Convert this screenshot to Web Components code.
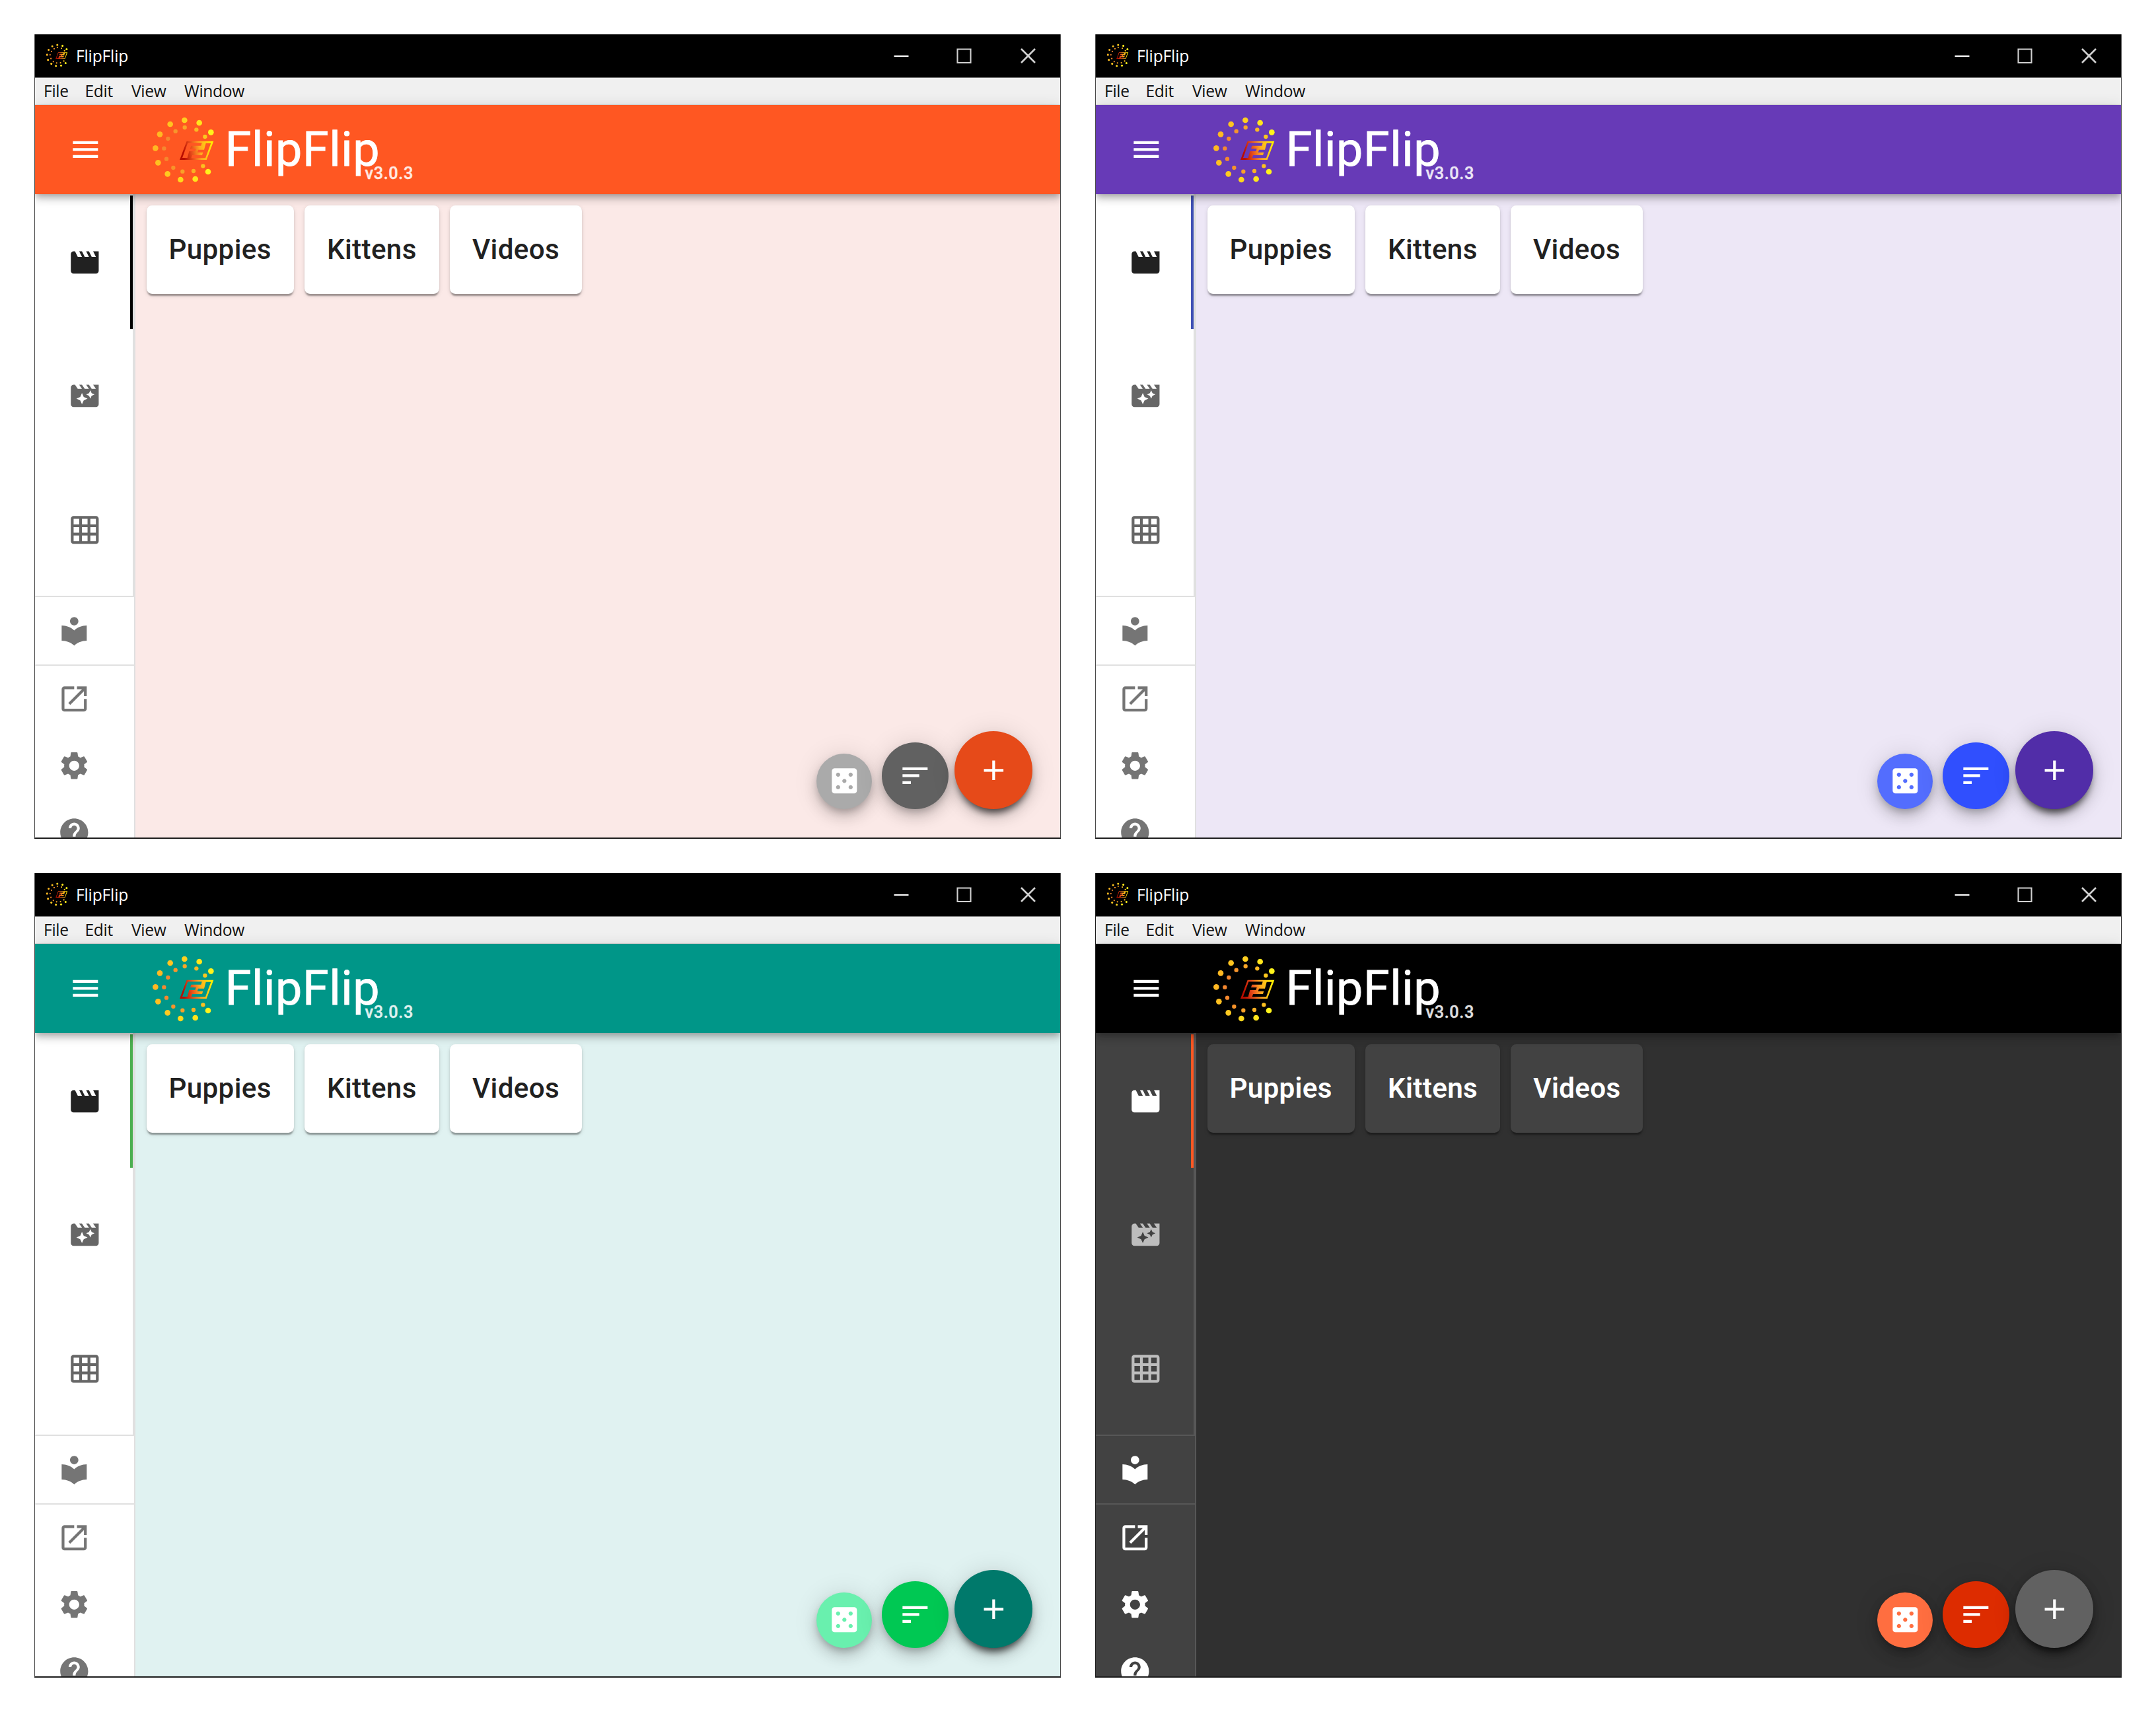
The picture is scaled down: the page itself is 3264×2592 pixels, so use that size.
<!DOCTYPE html>
<html lang="en">
<head>
<meta charset="utf-8">
<title>FlipFlip themes</title>
<style>
  html, body { margin: 0; background: #fff; }
  body { width: 3264px; height: 2592px; overflow: hidden; font-family: Roboto, "Liberation Sans", sans-serif; }
  .deep-orange { --bar:#ff5722; --bg:#fbe9e7; --mark:#000; --add:#e64a19; --sort:#616161; --dice:#aaa; }
  .purple { --bar:#673ab7; --bg:#ede7f6; --mark:#3f51b5; --add:#512da8; --sort:#304ffe; --dice:#536dfe; }
  .teal { --bar:#009688; --bg:#e0f2f1; --mark:#4caf50; --add:#00796b; --sort:#00c853; --dice:#69f0ae; }
  .dark { --bar:#000; --bg:#303030; --mark:#ff5722; --add:#616161; --sort:#dd2c00; --dice:#ff6e40;
    --paper:#424242; --line:#575757; --ink:#fff; --tab:#bdbdbd; --nav:#fff; --edge:#1c1c1c; --weight:600; --track:.29px; }
</style>
</head>
<body>
<theme-gallery>
  <flip-window class="deep-orange"></flip-window>
  <flip-window class="purple"></flip-window>
  <flip-window class="teal"></flip-window>
  <flip-window class="dark"></flip-window>
</theme-gallery>
<script>
const ICONS = {
  menu: 'M3 18h18v-2H3v2zm0-5h18v-2H3v2zm0-7v2h18V6H3z',
  movie: 'M18 4l2 4h-3l-2-4h-2l2 4h-3l-2-4H8l2 4H7L5 4H4c-1.1 0-1.99.9-1.99 2L2 18c0 1.1.9 2 2 2h16c1.1 0 2-.9 2-2V4h-4z',
  filter: 'M18 4l2 3h-3l-2-3h-2l2 3h-3l-2-3H8l2 3H7L5 4H4c-1.1 0-1.99.9-1.99 2L2 18c0 1.1.9 2 2 2h16c1.1 0 2-.9 2-2V4h-4zm-6.75 11.25L10 18l-1.25-2.75L6 14l2.750-1.25L10 10l1.250 2.750L14 14l-2.750 1.250zm5.690-3.310L16 14l-.940-2.060L13 11l2.060-.940L16 8l.940 2.060L19 11l-2.060.940z',
  grid: 'M20 2H4c-1.1 0-2 .9-2 2v16c0 1.1.9 2 2 2h16c1.100 0 2-.9 2-2V4c0-1.100-.9-2-2-2zM8 20H4v-4h4v4zm0-6H4v-4h4v4zm0-6H4V4h4v4zm6 12h-4v-4h4v4zm0-6h-4v-4h4v4zm0-6h-4V4h4v4zm6 12h-4v-4h4v4zm0-6h-4v-4h4v4zm0-6h-4V4h4v4z',
  library: 'M12 11.550C9.640 9.350 6.480 8 3 8v11c3.480 0 6.640 1.350 9 3.550 2.360-2.190 5.520-3.550 9-3.550V8c-3.480 0-6.640 1.350-9 3.550zM12 8c1.660 0 3-1.340 3-3s-1.340-3-3-3-3 1.340-3 3 1.340 3 3 3z',
  launch: 'M19 19H5V5h7V3H5c-1.110 0-2 .9-2 2v14c0 1.100.890 2 2 2h14c1.100 0 2-.9 2-2v-7h-2v7zM14 3v2h3.590l-9.830 9.830 1.410 1.410L19 6.410V10h2V3h-7z',
  settings: 'M19.140 12.940c.04-.3.060-.610.060-.940 0-.320-.020-.640-.070-.940l2.030-1.580c.180-.140.230-.410.120-.610l-1.920-3.320c-.120-.220-.370-.290-.590-.220l-2.390.960c-.5-.380-1.030-.7-1.620-.940l-.360-2.540c-.040-.240-.240-.410-.480-.410h-3.840c-.240 0-.430.170-.470.410l-.360 2.540c-.590.240-1.130.570-1.620.940l-2.390-.960c-.220-.080-.470 0-.590.220L2.740 8.870c-.120.210-.080.470.120.610l2.030 1.580c-.050.3-.090.630-.090.940s.020.640.070.940l-2.030 1.580c-.180.140-.230.410-.120.610l1.920 3.320c.120.220.370.290.590.220l2.390-.960c.5.380 1.030.7 1.620.940l.360 2.540c.050.240.240.410.480.410h3.840c.240 0 .440-.170.470-.410l.360-2.540c.590-.240 1.130-.560 1.620-.940l2.390.960c.220.080.470 0 .590-.220l1.920-3.320c.120-.220.070-.470-.120-.610l-2.010-1.580zM12 15.600c-1.980 0-3.600-1.620-3.600-3.600s1.620-3.600 3.600-3.600 3.600 1.620 3.600 3.600-1.620 3.600-3.600 3.600z',
  help: 'M12 2C6.480 2 2 6.480 2 12s4.480 10 10 10 10-4.480 10-10S17.520 2 12 2zm1 17h-2v-2h2v2zm2.070-7.750l-.9.920C13.450 12.900 13 13.500 13 15h-2v-.5c0-1.100.450-2.100 1.170-2.830l1.240-1.260c.370-.360.590-.860.590-1.410 0-1.100-.9-2-2-2s-2 .9-2 2H8c0-2.210 1.790-4 4-4s4 1.790 4 4c0 .880-.360 1.680-.930 2.250z',
  casino: 'M19 3H5c-1.100 0-2 .9-2 2v14c0 1.100.9 2 2 2h14c1.100 0 2-.9 2-2V5c0-1.100-.9-2-2-2zM7.500 18c-.830 0-1.500-.670-1.500-1.500S6.670 15 7.500 15s1.500.670 1.500 1.500S8.330 18 7.500 18zm0-9C6.670 9 6 8.330 6 7.500S6.670 6 7.500 6 9 6.670 9 7.500 8.330 9 7.500 9zm4.500 4.500c-.830 0-1.500-.670-1.500-1.500s.670-1.500 1.500-1.500 1.500.670 1.500 1.500-.670 1.500-1.500 1.500zm4.500 4.500c-.830 0-1.500-.670-1.500-1.500s.670-1.500 1.500-1.500 1.500.670 1.500 1.500-.670 1.500-1.500 1.500zm0-9c-.830 0-1.500-.670-1.500-1.500S15.670 6 16.500 6s1.500.670 1.500 1.500S17.330 9 16.500 9z',
  sort: 'M3 18h6v-2H3v2zM3 6v2h18V6H3zm0 7h12v-2H3v2z',
  add: 'M19 13h-6v6h-2v-6H5v-2h6V5h2v6h6v2z'
};
const define = (name, html, setup) => customElements.define(name, class extends HTMLElement {
  connectedCallback() {
    if (this.shadowRoot) return;
    const root = this.attachShadow({ mode: 'open' });
    root.innerHTML = typeof html === 'function' ? html(this) : html;
    if (setup) setup(this);
  }
});

define('theme-gallery', `<style>
  :host { display:grid; grid-template-columns:1554px 1554px; grid-auto-rows:1218px; gap:52px; padding:52px; }
</style><slot></slot>`);

define('md-icon', el => `<style>
  :host { display:block; width:50.67px; height:50.67px; flex:none; }
  svg { display:block; width:100%; height:100%; fill:currentColor; }
</style><svg viewBox="0 0 24 24"><path d="${ICONS[el.getAttribute('name')]}"/></svg>`);

/* Ring of sparks around a slanted two-tone badge. */
define('flip-logo', () => {
  const outer = [[193,51,'#ffd020'],[260,63,'#ffe51c'],[313,106,'#fff31c'],[300,285,'#fff31c'],[242,318,'#ffe51c'],[175,321,'#ffd81c'],
    [116,295,'#ffca20'],[73,244,'#ffc020'],[61,178,'#ffb822'],[81,115,'#ffb922'],[128,69,'#ffc420']];
  const inner = [[194,84,'#f9a628'],[247,94,'#f9b824'],[286,126,'#fbc81e'],[277,259,'#fbc020'],[234,282,'#f9b024'],[184,284,'#f9a028'],
    [142,267,'#f7932a'],[111,227,'#f5882e'],[100,179,'#f58830'],[118,135,'#f58830'],[152,101,'#f7952c']];
  const dots = (list, r) => list.map(([x, y, c]) => `<circle cx="${x}" cy="${y}" r="${r}" fill="${c}"/>`).join('');
  return `<style>:host{display:block;flex:none;width:130px;height:125px} svg{display:block;width:100%;height:100%}</style>
  <svg viewBox="0 0 390 375"><defs><linearGradient id="g" gradientUnits="userSpaceOnUse" x1="175" y1="200" x2="322" y2="175">
    <stop offset="0.08" stop-color="#b80c00"/><stop offset=".35" stop-color="#e8501c"/><stop offset=".6" stop-color="#ffa822"/><stop offset="1" stop-color="#fff000"/></linearGradient></defs>
    ${dots(outer, 13)}${dots(inner, 9.500)}
    <path fill="url(#g)" fill-rule="evenodd" d="M171 231L203 146H325L293 231ZM208 154H272L268 167H223L219 180H245L241 192H214L206 222H183ZM288 223H224L228 210H273L277 197H251L255 185H282L290 155H313Z"/></svg>`;
});

define('title-bar', `<style>
  :host { display:flex; align-items:center; height:65px; background:#000; color:#fff; padding-left:11px; box-sizing:border-box; flex:none; }
  flip-logo { width:46px; height:44px; margin-top:-1px; }
  .name { font:24.6px/34px "Open Sans", "Liberation Sans", sans-serif; letter-spacing:-.15px; margin-left:5px; flex:1; margin-top:1px; }
  .btn { width:96.500px; height:65px; display:grid; place-items:center; }
  svg { width:24px; height:24px; fill:none; stroke:#d0d0d0; stroke-width:2.100; display:block; }
</style><flip-logo></flip-logo><span class="name">FlipFlip</span>
<span class="btn"><svg viewBox="0 0 24 24"><path stroke="#fff" d="M1.500 12h22"/></svg></span>
<span class="btn"><svg viewBox="0 0 24 24"><path d="M1.500 1.500h20v20.500H1.500z"/></svg></span>
<span class="btn"><svg viewBox="0 0 24 24"><path stroke-width="2.600" d="M1 1L22 22M22 1L1 22"/></svg></span>`);

define('menu-bar', `<style>
  :host { display:flex; align-items:center; height:42px; background:#f0f0f0; color:#111; box-sizing:border-box; border-top:1px solid #777; border-bottom:1px solid #ddd;
    padding-left:13px; flex:none; font:24.6px/34px "Open Sans", "Liberation Sans", sans-serif; letter-spacing:-.3px; }
  span { white-space:nowrap; }
</style><span style="width:62.500px">File</span><span style="width:70.500px">Edit</span><span style="width:80px">View</span><span>Window</span>`);

define('app-bar', `<style>
  :host { display:flex; align-items:center; height:135.400px; flex:none; background:var(--bar); color:#fff; padding-left:50.500px; box-sizing:border-box;
    position:relative; z-index:2; box-shadow:0 4.200px 8.400px -2.100px rgba(0,0,0,.2),0 8.400px 10.600px 0 rgba(0,0,0,.14),0 2.100px 21px 0 rgba(0,0,0,.12); }
  flip-logo { margin:1.500px 0 0 60.700px; }
  h1 { margin:0 0 0 -4px; font-weight:400; font-size:71.800px; line-height:84px; letter-spacing:.55px; padding-top:1.500px; -webkit-text-stroke:.8px #fff; }
  .v { font-size:25.300px; line-height:30px; font-weight:500; letter-spacing:.6px; margin:72px 0 0 -22.500px; opacity:.87; -webkit-text-stroke:.4px #fff; }
</style><md-icon name="menu"></md-icon><flip-logo></flip-logo><h1>FlipFlip</h1><span class="v">v3.0.3</span>`);

define('side-tab', el => `<style>
  :host { display:flex; align-items:center; justify-content:center; height:202.670px; flex:none; color:var(--tab,#666); box-sizing:border-box;
    padding-left:7.400px; border-right:4.200px solid transparent; }
  :host([selected]) { color:var(--ink,#212121); border-right-color:var(--mark); }
</style><md-icon name="${el.getAttribute('icon')}"></md-icon>`);

define('nav-item', el => `<style>
  :host { display:flex; align-items:center; height:101.200px; flex:none; padding-left:33.600px; color:var(--nav,#757575); }
</style><md-icon name="${el.getAttribute('icon')}"></md-icon>`);

define('side-drawer', `<style>
  :host { display:flex; flex-direction:column; width:152px; box-sizing:border-box; flex:none; background:var(--paper,#fff); overflow:hidden; border-right:2px solid var(--line,#e0e0e0); }
  .tabs { flex:none; padding-top:1.200px; height:608px; box-sizing:border-box; border-right:2px solid var(--line,#e0e0e0); }
  .group { flex:none; border-top:2px solid var(--line,#e0e0e0); }
</style><div class="tabs"><side-tab icon="movie" selected></side-tab><side-tab icon="filter"></side-tab><side-tab icon="grid"></side-tab></div>
<div class="group"><nav-item icon="library"></nav-item></div>
<div class="group"><nav-item icon="launch"></nav-item><nav-item icon="settings"></nav-item><nav-item icon="help"></nav-item></div>`);

define('scene-card', `<style>
  :host { display:block; box-sizing:border-box; height:134.700px; padding:33.800px; border-radius:8.400px; background:var(--paper,#fff); color:var(--ink,#212121);
    font-size:42.200px; line-height:67px; font-weight:var(--weight,500); letter-spacing:var(--track,.36px); white-space:nowrap;
    box-shadow:0 4.200px 2.100px -2.100px rgba(0,0,0,.2),0 2.100px 2.100px 0 rgba(0,0,0,.14),0 2.100px 6.300px 0 rgba(0,0,0,.12); }
</style><slot></slot>`);

define('fab-button', el => `<style>
  :host { display:grid; place-items:center; border-radius:50%; color:#fff; flex:none; width:var(--size); height:var(--size);
    box-shadow:var(--deep,0 0 transparent),0 6.300px 10.500px -2.100px rgba(0,0,0,.2),0 12.700px 21px 0 rgba(0,0,0,.14),0 2.100px 38px 0 rgba(0,0,0,.12); }
  :host([kind=casino]) { --size:84.500px; background:var(--dice); }
  :host([kind=sort]) { --size:101.500px; background:var(--sort); margin-left:14.500px; }
  :host([kind=add]) { --size:118.300px; background:var(--add); margin-left:8.300px; --deep:0 12px 12px -7px rgba(0,0,0,.6); }
</style><md-icon name="${el.getAttribute('kind')}"></md-icon>`);

define('flip-window', `<style>
  :host { display:flex; flex-direction:column; width:1554px; height:1218px; box-sizing:border-box; overflow:hidden; background:var(--bg);
    border:solid var(--edge,#4a4a4a); border-width:0 1px 2px; border-bottom-color:#1c1c1c; }
  .body { flex:1; display:flex; min-height:0; }
  main { flex:1; display:flex; flex-direction:column; justify-content:space-between; padding:16.300px 42px 43px 16.600px; }
  .cards { display:flex; gap:16.600px; }
  .fabs { display:flex; justify-content:flex-end; align-items:flex-end; }
</style><title-bar></title-bar><menu-bar></menu-bar><app-bar></app-bar>
<div class="body"><side-drawer></side-drawer><main>
  <div class="cards"><scene-card>Puppies</scene-card><scene-card>Kittens</scene-card><scene-card>Videos</scene-card></div>
  <div class="fabs"><fab-button kind="casino"></fab-button><fab-button kind="sort"></fab-button><fab-button kind="add"></fab-button></div>
</main></div>`);
</script>
</body>
</html>
